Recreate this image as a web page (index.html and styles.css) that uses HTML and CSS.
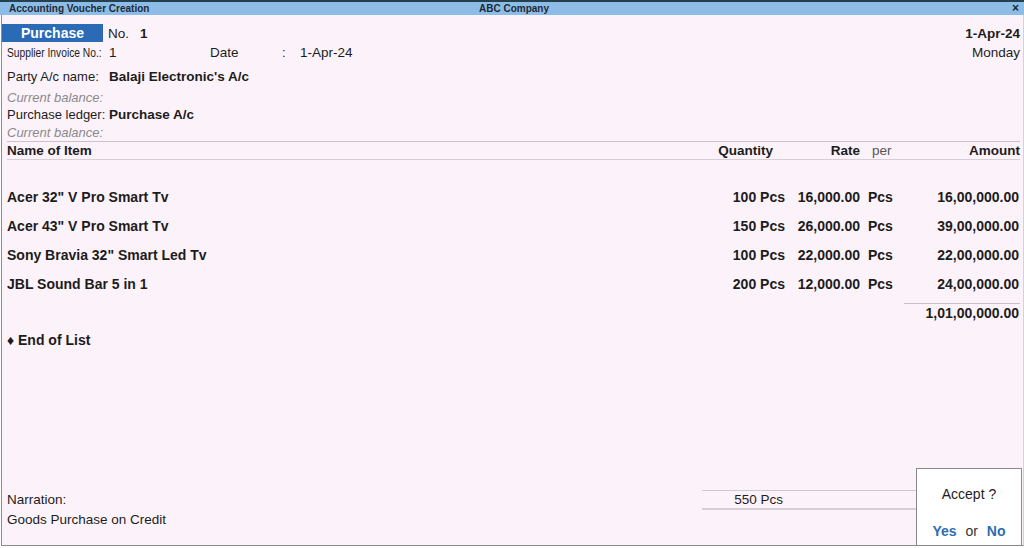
FILE: index.html
```html
<!DOCTYPE html>
<html lang="en">

<head>
  <meta charset="UTF-8">
  <meta name="viewport" content="width=device-width, initial-scale=1.0">
  <title>Accounting Voucher Creation</title>
  <link rel="stylesheet" href="styles.css">
</head>

<body>
  <div class="page">
    <div class="top-strip"></div>
    <div class="titlebar">
      <span class="title-left">Accounting Voucher Creation</span>
      <span class="title-center">ABC Company</span>
      <span class="title-close">&times;</span>
    </div>

    <div class="voucher">
      <div class="head">
        <div class="head-left">
          <div class="row row-1">
            <span class="badge">Purchase</span>
            <span class="no-label">No.</span>
            <span class="bold">1</span>
          </div>
          <div class="row row-2">
            <span class="label"><span class="narrow">Supplier Invoice No.:</span></span>
            <span class="inv-value">1</span>
            <span class="date-label">Date</span>
            <span class="colon">:</span>
            <span>1-Apr-24</span>
          </div>
          <div class="row row-3">
            <span class="label">Party A/c name:</span>
            <span class="bold">Balaji Electronic's A/c</span>
          </div>
          <div class="row row-4">
            <span class="balance">Current balance:</span>
          </div>
          <div class="row row-5">
            <span class="label">Purchase ledger:</span>
            <span class="bold">Purchase A/c</span>
          </div>
          <div class="row row-6">
            <span class="balance">Current balance:</span>
          </div>
        </div>
        <div class="head-right">
          <div class="row row-1 bold">1-Apr-24</div>
          <div class="row row-2">Monday</div>
        </div>
      </div>

      <div class="items">
        <div class="item-row item-head">
          <span class="c-name">Name of Item</span>
          <span class="c-qty">Quantity</span>
          <span class="c-rate">Rate</span>
          <span class="c-per">per</span>
          <span class="c-amt">Amount</span>
        </div>
        <div class="spacer"></div>
        <div class="item-row">
          <span class="c-name">Acer 32" V Pro Smart Tv</span>
          <span class="c-qty">100 Pcs</span>
          <span class="c-rate">16,000.00</span>
          <span class="c-per">Pcs</span>
          <span class="c-amt">16,00,000.00</span>
        </div>
        <div class="item-row">
          <span class="c-name">Acer 43" V Pro Smart Tv</span>
          <span class="c-qty">150 Pcs</span>
          <span class="c-rate">26,000.00</span>
          <span class="c-per">Pcs</span>
          <span class="c-amt">39,00,000.00</span>
        </div>
        <div class="item-row">
          <span class="c-name">Sony Bravia 32" Smart Led Tv</span>
          <span class="c-qty">100 Pcs</span>
          <span class="c-rate">22,000.00</span>
          <span class="c-per">Pcs</span>
          <span class="c-amt">22,00,000.00</span>
        </div>
        <div class="item-row">
          <span class="c-name">JBL Sound Bar 5 in 1</span>
          <span class="c-qty">200 Pcs</span>
          <span class="c-rate">12,000.00</span>
          <span class="c-per">Pcs</span>
          <span class="c-amt">24,00,000.00</span>
        </div>
        <div class="total-row">
          <span class="total-amt">1,01,00,000.00</span>
        </div>
        <div class="end-row">&#9830; End of List</div>
      </div>

      <div class="footer">
        <div class="narration">
          <div class="foot-line">Narration:</div>
          <div class="foot-line">Goods Purchase on Credit</div>
        </div>
        <div class="qty-total">
          <span class="qty-total-val">550 Pcs</span>
        </div>
      </div>
    </div>

    <div class="accept">
      <div class="accept-title">Accept ?</div>
      <div class="accept-opts"><span class="opt">Yes</span> or <span class="opt">No</span></div>
    </div>
  </div>
</body>

</html>
```

FILE: styles.css
```css
* {
  margin: 0;
  padding: 0;
  box-sizing: border-box;
}

body {
  width: 1024px;
  height: 548px;
  overflow: hidden;
  background-color: #ffffff;
  font-family: "Liberation Sans", Arial, sans-serif;
  font-size: 13px;
  color: #1c1c1c;
}

.page {
  position: relative;
  height: 546px;
  display: flex;
  flex-direction: column;
}

.top-strip {
  height: 2px;
  background-color: #24404f;
}

.titlebar {
  height: 13px;
  background-color: #8dbde6;
  display: grid;
  grid-template-columns: 1fr auto 1fr;
  align-items: center;
  font-size: 10px;
  font-weight: bold;
  color: #1d2a36;
  padding: 0 5px 0 9px;
  line-height: 13px;
}

.title-close {
  text-align: right;
  font-size: 12px;
}

.voucher {
  flex: 1;
  display: flex;
  flex-direction: column;
  margin-left: 1px;
  border-left: 1px solid #8c8c8c;
  border-bottom: 1px solid #8c8c8c;
  border-right: 1px solid #d8d0d6;
  background-color: #fcf3fa;
  padding: 9px 3px 0 5px;
}

.head {
  display: flex;
  justify-content: space-between;
}

.row {
  display: flex;
  align-items: center;
  white-space: nowrap;
}

.row-1 { height: 18px; }
.row-2 { height: 20px; }
.row-3 { height: 28px; }
.row-4 { height: 14px; }
.row-5 { height: 20px; }
.row-6 { height: 16px; }

.head-right .row {
  justify-content: flex-end;
  font-size: 13.5px;
}

.bold {
  font-weight: bold;
  font-size: 13.5px;
}

.badge {
  width: 101px;
  height: 18px;
  margin-left: -5px;
  background-color: #2b6bb6;
  color: #ffffff;
  font-weight: bold;
  font-size: 14px;
  text-align: center;
  line-height: 18px;
}

.no-label {
  margin-left: 5px;
  width: 32px;
  font-size: 13.5px;
}

.label {
  width: 102px;
}

.narrow {
  display: inline-block;
  font-size: 13.5px;
  transform: scaleX(0.76);
  transform-origin: left center;
}

.inv-value {
  width: 101px;
  font-size: 13.5px;
}

.date-label {
  width: 72px;
  font-size: 13.5px;
}

.colon {
  width: 18px;
}

.row-2 span:last-child {
  font-size: 13.5px;
}

.balance {
  font-style: italic;
  color: #8a8a8a;
}

.items {
  margin-top: 1px;
  border-top: 1px solid #c9c3c7;
}

.item-row {
  display: flex;
  align-items: center;
  height: 29px;
  font-weight: bold;
  font-size: 14px;
  white-space: nowrap;
}

.item-head {
  height: 18px;
  font-size: 13.5px;
  border-bottom: 1px solid #d6cfd4;
}

.spacer {
  height: 22px;
}

.c-name {
  flex: 1;
}

.c-qty {
  width: 84px;
  text-align: right;
}

.c-rate {
  width: 75px;
  text-align: right;
}

.c-per {
  width: 45px;
  padding-left: 8px;
}

.c-amt {
  width: 115px;
  text-align: right;
  padding-right: 1px;
}

.item-head .c-qty {
  padding-right: 12px;
}

.item-head .c-per {
  font-weight: normal;
  color: #555;
  padding-left: 12px;
}

.item-head .c-amt {
  padding-right: 0;
}

.total-row {
  display: flex;
  justify-content: flex-end;
  margin-top: 5px;
}

.total-amt {
  width: 116px;
  height: 19px;
  line-height: 18px;
  border-top: 1px solid #c9c3c7;
  text-align: right;
  font-weight: bold;
  font-size: 14px;
  padding-right: 1px;
}

.end-row {
  margin-top: 9px;
  height: 18px;
  line-height: 18px;
  font-weight: bold;
  font-size: 14px;
}

.footer {
  margin-top: auto;
  margin-bottom: 15px;
  display: flex;
  justify-content: space-between;
  align-items: flex-start;
  font-size: 13.5px;
}

.foot-line {
  height: 20px;
  line-height: 20px;
}

.qty-total {
  width: 318px;
  height: 20px;
  border-top: 1px solid #cfc8cd;
  border-bottom: 2px solid #d4d0d3;
  line-height: 17px;
}

.qty-total-val {
  display: inline-block;
  width: 81px;
  text-align: right;
}

.accept {
  position: absolute;
  right: 2px;
  bottom: 0;
  width: 106px;
  height: 78px;
  background-color: #ffffff;
  border: 1.5px solid #8a8a8a;
  display: flex;
  flex-direction: column;
  align-items: center;
  font-size: 14px;
}

.accept-title {
  margin-top: 16px;
  height: 18px;
  line-height: 18px;
}

.accept-opts {
  margin-top: 20px;
  color: #333;
}

.opt {
  color: #2f6db3;
  font-weight: bold;
  margin: 0 5px;
}
```
